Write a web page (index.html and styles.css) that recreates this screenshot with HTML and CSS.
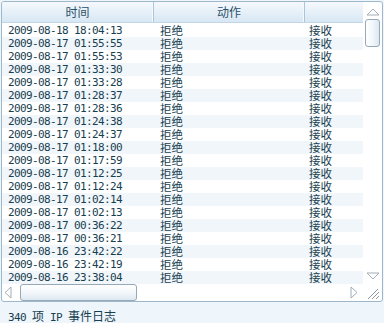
FILE: index.html
```html
<!DOCTYPE html>
<html lang="zh-CN">
<head>
    <meta charset="UTF-8">
    <title>IP 事件日志</title>
    <link rel="stylesheet" href="styles.css">
</head>
<body>
    <div class="listbox">
        <div class="table">
            <div class="head">
                <div class="hcell c1">时间</div>
                <div class="hcell c2">动作</div>
                <div class="hcell c3"></div>
            </div>
            <div class="rows" id="rows"></div>
        </div>

        <div class="vscroll">
            <svg class="arrow" width="14" height="8" viewBox="0 0 14 8"><path d="M1 7 L7 1 L13 7 Z" fill="#fff" stroke="#a3adb6"/></svg>
            <div class="vthumb"></div>
            <div class="spacer"></div>
            <svg class="arrow down" width="14" height="8" viewBox="0 0 14 8"><path d="M1 1 L7 7 L13 1 Z" fill="#fff" stroke="#a3adb6"/></svg>
        </div>

        <div class="hscroll">
            <svg class="arrow left" width="8" height="13" viewBox="0 0 8 13"><path d="M7 1 L1 6.5 L7 12 Z" fill="#fff" stroke="#a3adb6"/></svg>
            <div class="hthumb"></div>
            <div class="spacer"></div>
            <svg class="arrow right" width="8" height="13" viewBox="0 0 8 13"><path d="M1 1 L7 6.5 L1 12 Z" fill="#fff" stroke="#a3adb6"/></svg>
        </div>

        <div class="grip">
            <svg width="14" height="12" viewBox="0 0 14 12">
                <path d="M2 11 L12 1 M6 11 L13 4 M10 11 L13 8" stroke="#8d969e" stroke-width="1"/>
            </svg>
        </div>
    </div>

    <div class="status"><span class="en">340 </span>项<span class="en"> IP </span>事件日志</div>

    <script>
        // log entries, newest first; every one was blocked (拒绝) and received (接收)
        const times = [
            '2009-08-18 18:04:13', '2009-08-17 01:55:55', '2009-08-17 01:55:53',
            '2009-08-17 01:33:30', '2009-08-17 01:33:28', '2009-08-17 01:28:37',
            '2009-08-17 01:28:36', '2009-08-17 01:24:38', '2009-08-17 01:24:37',
            '2009-08-17 01:18:00', '2009-08-17 01:17:59', '2009-08-17 01:12:25',
            '2009-08-17 01:12:24', '2009-08-17 01:02:14', '2009-08-17 01:02:13',
            '2009-08-17 00:36:22', '2009-08-17 00:36:21', '2009-08-16 23:42:22',
            '2009-08-16 23:42:19', '2009-08-16 23:38:04'
        ];
        const rows = document.getElementById('rows');
        times.forEach(function(t) {
            const row = document.createElement('div');
            row.className = 'row';
            row.innerHTML = '<span class="cell c1 en">' + t + '</span>' +
                '<span class="cell c2">拒绝</span>' +
                '<span class="cell c3">接收</span>';
            rows.appendChild(row);
        });
    </script>
</body>
</html>
```

FILE: styles.css
```css
:root {
    --border: #9db7cc;
    --text: #17404f;
    --stripe: #f1f6fb;
    --page: #eef5fb;
}

* {
    box-sizing: border-box;
    margin: 0;
    padding: 0;
}

body {
    background: var(--page);
    color: var(--text);
    font-family: "Noto Sans CJK SC", sans-serif;
    font-size: 12px;
    width: 384px;
    height: 323px;
    overflow: hidden;
}

.en {
    font-family: "DejaVu Sans Mono", monospace;
    font-size: 11px;
    letter-spacing: -0.62px;
    white-space: pre;
}

.listbox {
    margin: 1px 0 0 1px;
    width: 382px;
    height: 301px;
    border: 1px solid var(--border);
    border-radius: 3px;
    background: #fff;
    display: grid;
    grid-template-columns: 1fr 19px;
    grid-template-rows: 1fr 17px;
    overflow: hidden;
}

.table {
    overflow: hidden;
    display: flex;
    flex-direction: column;
}

.head {
    display: flex;
    height: 21px;
    flex-shrink: 0;
    background: linear-gradient(#f5f9fd, #e6f0f8 50%, #d7e7f4);
    border-bottom: 1px solid #c3d6e5;
}

.hcell {
    line-height: 20px;
    text-align: center;
    color: #2a5168;
    border-right: 1px solid #aec5d7;
    box-shadow: inset -1px 0 0 #f4f9fd;
}

.hcell.c3 {
    flex: 1;
    border-right: none;
    box-shadow: none;
}

.c1 { width: 152px; flex-shrink: 0; }
.c2 { width: 151px; flex-shrink: 0; }

.rows {
    padding-top: 1px;
}

.row {
    display: flex;
    align-items: center;
    height: 13px;
}

.row:nth-child(even) {
    background: var(--stripe);
}

.cell {
    white-space: nowrap;
    line-height: 13px;
}

.cell.c1 { padding-left: 6px; }
.cell.c2 { padding-left: 6px; font-size: 11.5px; }
.cell.c3 { padding-left: 4px; flex: 1; font-size: 11.5px; }

.vscroll {
    display: flex;
    flex-direction: column;
    align-items: center;
    padding: 6px 0 4px;
}

.vscroll .arrow {
    flex-shrink: 0;
}

.vthumb {
    margin-top: 3px;
    width: 15px;
    height: 28px;
    border: 1px solid #98a8b6;
    border-radius: 3px;
    background: linear-gradient(90deg, #ffffff, #f2f7fb 50%, #dbe7f1);
}

.spacer {
    flex: 1;
}

.hscroll {
    display: flex;
    align-items: center;
    padding-left: 2px;
    padding-right: 5px;
}

.hthumb {
    margin-left: 8px;
    width: 117px;
    height: 17px;
    border: 1px solid #98a8b6;
    border-radius: 3px;
    background: linear-gradient(#ffffff, #f3f7fb 50%, #dde8f1);
}

.grip {
    display: flex;
    align-items: flex-end;
    justify-content: center;
    padding-bottom: 1px;
}

.status {
    padding: 7px 0 0 8px;
    line-height: 14px;
}
```
